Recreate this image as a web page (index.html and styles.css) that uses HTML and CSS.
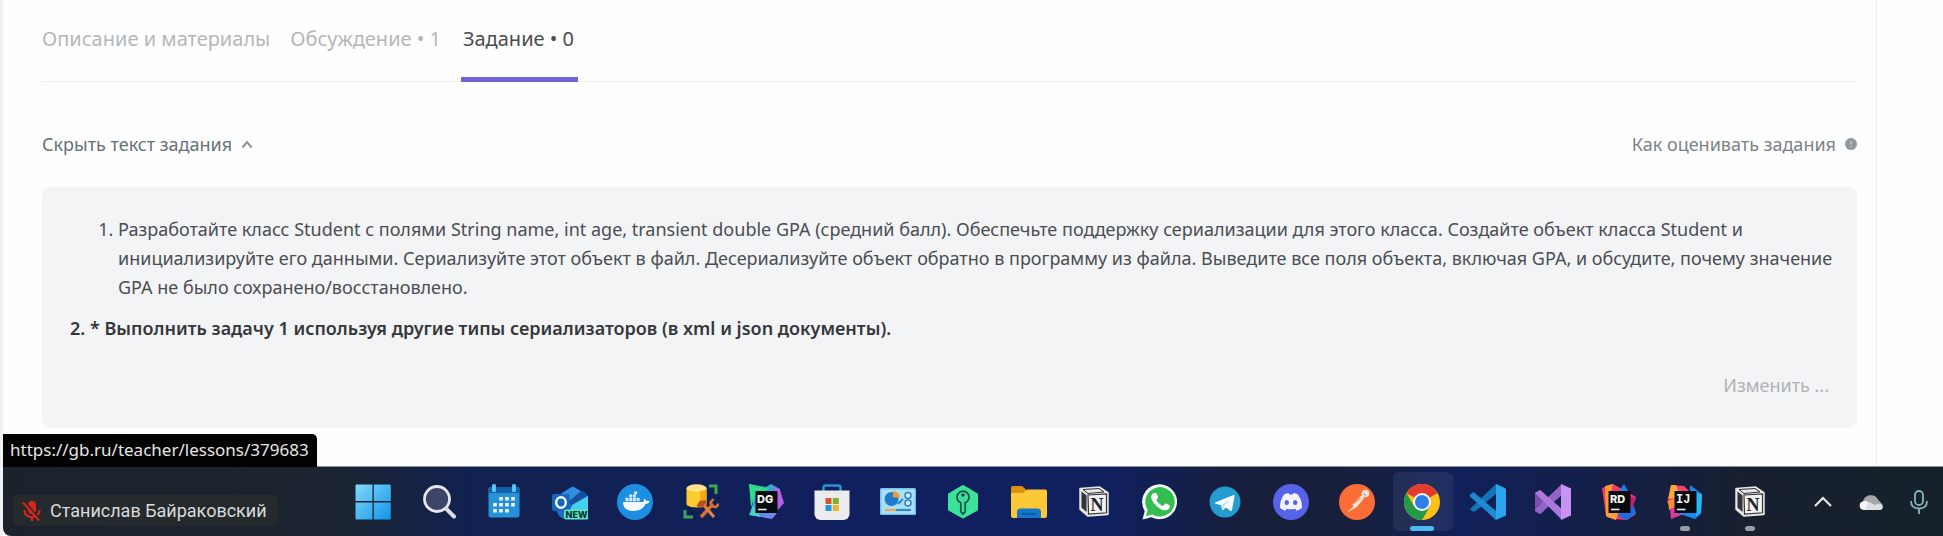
FILE: index.html
```html
<!DOCTYPE html>
<html lang="ru">
<head>
<meta charset="utf-8">
<title>Задание</title>
<meta name="viewport" content="width=device-width, initial-scale=1">
<link rel="stylesheet" href="styles.css">
</head>
<body>
<main class="lesson">
  <nav class="tabs" aria-label="Разделы урока">
    <a class="tab" href="#materials">Описание и материалы</a>
    <a class="tab" href="#discussion">Обсуждение • 1</a>
    <a class="tab tab-active" href="#task" aria-current="page">Задание • 0</a>
  </nav>
  <div class="task-bar">
    <button class="link-button" type="button">Скрыть текст задания
      <svg class="chevron" viewBox="0 0 12 10" aria-hidden="true"><path d="M1.500 8.500 6 3l4.500 5.500" fill="none" stroke="#8d9297" stroke-width="2"/></svg>
    </button>
    <a class="link-button help" href="#rating">Как оценивать задания
      <svg class="info" viewBox="0 0 12 12" aria-hidden="true"><circle cx="6" cy="6" r="6" fill="#929799"/><path d="M6 3v3.500M6 8v1.200" stroke="#c9cccd" stroke-width="1.500"/></svg>
    </a>
  </div>
  <section class="task" id="task">
    <ol class="task-list">
      <li>Разработайте класс Student с полями String name, int age, transient double GPA (средний балл). Обеспечьте поддержку сериализации для этого класса. Создайте объект класса Student и инициализируйте его данными. Сериализуйте этот объект в файл. Десериализуйте объект обратно в программу из файла. Выведите все поля объекта, включая GPA, и обсудите, почему значение GPA не было сохранено/восстановлено.</li>
    </ol>
    <ol class="task-list task-extra" start="2">
      <li>* Выполнить задачу 1 используя другие типы сериализаторов (в xml и json документы).</li>
    </ol>
    <button class="edit" type="button">Изменить ...</button>
  </section>
</main>

<footer class="taskbar">
  <div class="status">https://gb.ru/teacher/lessons/379683</div>
  <div class="speaker-area">
    <div class="speaker">
      <svg class="muted" viewBox="0 0 20 24" aria-hidden="true"><rect x="6" y="2" width="8" height="13" rx="4" fill="#d8261c"/><path d="M2.500 11c0 4.500 3 7 7.500 7s7.500-2.500 7.500-7M10 18v4" fill="none" stroke="#d8261c" stroke-width="2.200"/><path d="M2.500 2.500l16 18" stroke="#252a2d" stroke-width="1.500"/><path d="M1 3.500l16 18" stroke="#d8261c" stroke-width="2"/></svg>
      <span>Станислав Байраковский</span>
    </div>
  </div>
  <div class="apps">
    <button class="app" type="button" aria-label="Пуск"><svg viewBox="0 0 36 36"><defs><linearGradient id="win" gradientUnits="userSpaceOnUse" x1="1" y1="1" x2="35" y2="35"><stop offset="0" stop-color="#80d9f9"/><stop offset="1" stop-color="#1494ea"/></linearGradient></defs><path fill="url(#win)" d="M1.500.500h16v16.500h-17V1.500a1 1 0 0 1 1-1zM18.800.500h16a1 1 0 0 1 1 1V17h-17zM.500 18.500h17v17h-16a1 1 0 0 1-1-1zM18.800 18.500h17v16a1 1 0 0 1-1 1h-16z"/></svg></button>
    <button class="app" type="button" aria-label="Поиск"><svg viewBox="0 0 36 36"><circle cx="17" cy="15" r="12.500" fill="#3c4468" stroke="#e4e4ea" stroke-width="2.800"/><path d="M26.500 25l7.500 7.500" stroke="#dcdce2" stroke-width="4" stroke-linecap="round"/></svg></button>
    <button class="app" type="button" aria-label="Календарь"><svg viewBox="0 0 36 36"><rect x="2.500" y="3" width="31" height="30.500" rx="2" fill="#2491d8"/><path d="M2.500 9V5a2 2 0 0 1 2-2h27a2 2 0 0 1 2 2v4z" fill="#1262a8"/><g fill="#5bc3f2"><rect x="6" y="0" width="4" height="8" rx="1.500"/><rect x="26" y="0" width="4" height="8" rx="1.500"/></g><g fill="#f2f8fc"><path d="M13.200 13h3.600v3.600h-3.600zM19.200 13h3.600v3.600h-3.600zM25.200 13h3.600v3.600h-3.600zM7.200 19h3.600v3.600H7.200zM13.200 19h3.600v3.600h-3.600zM19.200 19h3.600v3.600h-3.600zM25.200 19h3.600v3.600h-3.600zM7.200 25h3.600v3.600H7.200zM13.200 25h3.600v3.600h-3.600zM19.200 25h3.600v3.600h-3.600z"/></g></svg></button>
    <button class="app" type="button" aria-label="Outlook"><svg viewBox="0 0 36 36"><path d="M5 12L20 2.500 36 12v20a3 3 0 0 1-3 3H14a9 9 0 0 1-9-8z" fill="#1b6fc4"/><path d="M8 11l13-8.500L34 10 20 18z" fill="#2f8fe4"/><path d="M17 17L30 6.500l6 4.500-16 12z" fill="#164f9e"/><path d="M36 12v20a3 3 0 0 1-3 3H15l5-14z" fill="#45d0ec"/><rect x="0" y="10" width="17.500" height="17" rx="2" fill="#1467bd"/><ellipse cx="9" cy="18.500" rx="4.800" ry="5.300" fill="none" stroke="#f4f8ff" stroke-width="2.400"/><rect x="12" y="25.500" width="24.500" height="10" rx="2" fill="#5de6c8"/><text x="13.500" y="34" class="badge-new">NEW</text></svg></button>
    <button class="app" type="button" aria-label="Docker"><svg viewBox="0 0 36 36"><circle cx="18" cy="18" r="18" fill="#1d8ee2"/><path d="M6 18h20c1.200-.300 1.400-2.300.700-3.600 1.800.500 2.200 1.600 2.600 2.600 1.400-.400 2.500-.100 3.300.500-.700 1.600-2 2.400-4.200 2.400C26.500 24.800 22 27 16.500 27 9.500 27 6 24 6 18z" fill="#f5f9fd"/><path d="M8.500 13.800h3v3.400h-3zM12.200 13.800h3v3.400h-3zM15.900 13.800h3v3.400h-3zM19.600 13.800h3v3.400h-3zM12.200 10.600h3v2.700h-3zM15.900 10.600h3v2.700h-3zM17.200 7.600h3v2.600h-3z" fill="#d6ebfa"/></svg></button>
    <button class="app" type="button" aria-label="Конструктор баз данных"><svg viewBox="0 0 36 36"><path d="M26 2h7v8M2 26v7h8" fill="none" stroke="#3ba55a" stroke-width="3"/><path d="M3.500 4v16c0 4.500 20 4.500 20 0V4z" fill="#fccb2e"/><path d="M17 3v20.500c4-.500 6.500-1.500 6.500-3.500V4z" fill="#f3a919"/><ellipse cx="13.500" cy="4" rx="10" ry="3.700" fill="#ffe48a"/><path d="M18 33l12-13" stroke="#d9702a" stroke-width="3.400"/><path d="M30.500 15l-3 3.500 1.500 4 4 .500 3-3" fill="none" stroke="#d9702a" stroke-width="2.600"/><path d="M19 19l12 14" stroke="#e2833d" stroke-width="3.200"/><path d="M13.500 22l3-5 6-1 1 3-5 5z" fill="#b84f1d"/></svg></button>
    <button class="app" type="button" aria-label="DataGrip"><svg viewBox="0 0 36 36"><defs><linearGradient id="dg" x1="0" y1="0" x2="1" y2="1"><stop offset="0" stop-color="#26d88b"/><stop offset=".5" stop-color="#3b9be0"/><stop offset="1" stop-color="#9475f5"/></linearGradient></defs><path d="M1 0l17 3 5-3 9 5-3 24-5 6L2 31l3-13z" fill="url(#dg)"/><path d="M1 0l20 5-14 7-4 11z" fill="#2ddb8d"/><path d="M26 3l6 3 4 13-6 7-5-9z" fill="#b65ee8"/><path d="M5 22l-4 9 12 2z" fill="#4acfc9"/><rect x="7.500" y="7" width="22" height="22" fill="#080b10"/><text x="9" y="18.500" class="ide-mark">DG</text><path d="M10 25.500h8.500" stroke="#eee" stroke-width="1.600"/></svg></button>
    <button class="app" type="button" aria-label="Microsoft Store"><svg viewBox="0 0 36 36"><path d="M9.500 8V3.200A1.700 1.700 0 0 1 11.200 1.500h13.600a1.700 1.700 0 0 1 1.700 1.700V8" fill="none" stroke="#2897d4" stroke-width="2.400"/><path d="M.500 6.500h35V30a6 6 0 0 1-6 6h-23a6 6 0 0 1-6-6z" fill="#ececef"/><path d="M11.500 14h6v6h-6z" fill="#d8542c"/><path d="M18.800 14h6v6h-6z" fill="#78b52a"/><path d="M11.500 21h6v6h-6z" fill="#2496da"/><path d="M18.800 21h6v6h-6z" fill="#f0b524"/></svg></button>
    <button class="app" type="button" aria-label="Панель управления"><svg viewBox="0 0 36 36"><rect x="0" y="4" width="36" height="27" rx="1.500" fill="#77c5ef"/><rect x="1.500" y="5.500" width="33" height="24" fill="#a9e0f8"/><circle cx="11.500" cy="15" r="7" fill="#1e7cc8"/><path d="M13 13.500V7a7 7 0 0 1 7 6.500z" fill="#f29a38"/><path d="M18 20l5-5" stroke="#3182bd" stroke-width="2"/><circle cx="28" cy="11.500" r="3" fill="#cfeefb" stroke="#3182bd" stroke-width="1.500"/><circle cx="28" cy="19" r="3" fill="#cfeefb" stroke="#3182bd" stroke-width="1.500"/><path d="M5 26h11" stroke="#f0a748" stroke-width="2.200"/><path d="M16 26h15" stroke="#2f88c8" stroke-width="2.200"/></svg></button>
    <button class="app" type="button" aria-label="Менеджер паролей"><svg viewBox="0 0 36 36"><path d="M18 2.500l13.500 8v15L18 33 4.500 25.500v-15z" fill="#3be39a" stroke="#3be39a" stroke-width="3" stroke-linejoin="round"/><path d="M15.800 18.700a6 6 0 1 1 4.400 0v9L18 30l-2.200-2.300z" fill="none" stroke="#124c48" stroke-width="1.700"/><circle cx="18" cy="11" r="1.800" fill="#124c48"/></svg></button>
    <button class="app" type="button" aria-label="Проводник"><svg viewBox="0 0 36 36"><path d="M0 10V4a2 2 0 0 1 2-2h9l4 3.500V10z" fill="#d9920f"/><path d="M0 9h12l4-3.500h18a2 2 0 0 1 2 2V32a2 2 0 0 1-2 2H2a2 2 0 0 1-2-2z" fill="#fbc935"/><path d="M6 34v-6a3.500 3.500 0 0 1 3.500-3.500h17A3.500 3.500 0 0 1 30 28v6z" fill="#1676c8"/><path d="M11 30h14" stroke="#0c5299" stroke-width="1.500"/></svg></button>
    <button class="app" type="button" aria-label="Notion"><svg viewBox="0 0 36 36"><path d="M4.500 5l19-1.500 8 5.500v21L12 31.500 4.500 25z" fill="#e6e6e4" stroke="#e6e6e4" stroke-width="2.500" stroke-linejoin="round"/><path d="M5.500 7.500l5 4V28l-5-4.500z" fill="#30333a"/><path d="M7 5.500L23 4.500l5 3.500-16 1.500z" fill="#e6e6e4" stroke="#30333a" stroke-width="1"/><path d="M12 11l18.500-1.200v19L12.500 30z" fill="#f3f3f0" stroke="#30333a" stroke-width="1.200"/><text x="14.500" y="27" class="notion-mark">N</text></svg></button>
    <button class="app" type="button" aria-label="WhatsApp"><svg viewBox="0 0 36 36"><path d="M.500 35.500L2.700 27A17.500 17.500 0 1 1 9.500 33.300z" fill="#f2f7f2"/><path d="M4 32l1.700-6.200A14.700 14.700 0 1 1 10.500 30.400z" fill="#35be50"/><path d="M12.500 9c-1.500 0-3.300 1.800-3.300 4.300 0 4 7.500 13 14 13 2.900 0 4.800-2 4.800-4.300 0-1-3.800-2.600-4.600-2.600-1 0-1.700 2.500-2.500 2.500-1.400 0-6-3.700-6.500-5.800-.100-.700 1.700-1.700 1.700-2.600 0-.800-1.500-4.200-2.100-4.500z" fill="#fff"/></svg></button>
    <button class="app" type="button" aria-label="Telegram"><svg viewBox="0 0 36 36"><circle cx="18" cy="18" r="15.500" fill="#259bd0"/><path d="M8 18.500L26.500 11c.800-.300 1.300.200 1.100 1L25 26c-.200 1-.900 1.200-1.700.700l-4.500-3.300-2.500 2.500c-.700.500-1.200.200-1.300-.500l-1-4.200-5.800-1.700c-.900-.300-.9-.700-.2-1z" fill="#f4fafd"/><path d="M14.500 21.500L23.500 15l-6.800 7.200-.4 3.500z" fill="#b6dcef"/></svg></button>
    <button class="app" type="button" aria-label="Discord"><svg viewBox="0 0 36 36"><circle cx="18" cy="18" r="18" fill="#5563e8"/><path d="M11 10.500c1.500-.8 3-1.200 4.500-1.400l.8 1.500h3.400l.8-1.500c1.500.2 3 .6 4.500 1.400 3 4.500 4.300 8.800 3.800 13.500-2 1.500-3.500 2.200-5.300 2.700l-1.300-2c-2.800.8-5.600.8-8.400 0l-1.300 2c-1.800-.5-3.300-1.200-5.300-2.700-.5-4.700.8-9 3.800-13.500z" fill="#f3f3fd"/><ellipse cx="13.800" cy="18.500" rx="2.200" ry="2.500" fill="#5563e8"/><ellipse cx="22.200" cy="18.500" rx="2.200" ry="2.500" fill="#5563e8"/></svg></button>
    <button class="app" type="button" aria-label="Postman"><svg viewBox="0 0 36 36"><circle cx="18" cy="18" r="18" fill="#fb6c36"/><circle cx="26.500" cy="9.500" r="3.800" fill="#fbe3d8"/><path d="M24 10L13 20.500l1.500 2L8 28.500l10-5.500 7-9z" fill="#fbe3d8"/><path d="M24.500 9.500l2.500 2M13.500 20.500l8-6.500" stroke="#e8673a" stroke-width="1" fill="none"/></svg></button>
    <button class="app app-current" type="button" aria-label="Chrome"><svg viewBox="0 0 36 36"><circle cx="18" cy="18" r="18" fill="#fbc116"/><path d="M18 18L2.400 9A18 18 0 0 1 33.600 9z" fill="#e33b2e"/><path d="M2.400 9a18 18 0 0 0 15.600 27l7.800-13.500L18 18l-7.800 4.500z" fill="#249a48"/><circle cx="18" cy="18" r="9" fill="#f5f7fb"/><circle cx="18" cy="18" r="7" fill="#2e7de9"/></svg></button>
    <button class="app" type="button" aria-label="Visual Studio Code"><svg viewBox="0 0 36 36"><path d="M26 0L4.500 20.500 1 24l-1 1.500L3.500 28 7 26 27 9z" fill="#1574b5"/><path d="M3.500 8L0 10.500v2L26 36V27z" fill="#1f8ad2"/><path d="M26 0l9 4a2 2 0 0 1 1 1.800v24.400a2 2 0 0 1-1 1.800l-9 4V0z" fill="#2aa5ee"/></svg></button>
    <button class="app" type="button" aria-label="Visual Studio"><svg viewBox="0 0 36 36"><path d="M0 9l5-3 4 3v18l-4 3-5-3z" fill="#7b4fb0"/><path d="M27 0L0 25.500V27l5 3L27 11z" fill="#9465c9"/><path d="M0 9l5-3 22 19v11z" fill="#ad79df"/><path d="M26 0l10 4.500v27L26 36z" fill="#c993f3"/></svg></button>
    <button class="app" type="button" aria-label="Rider"><svg viewBox="0 0 36 36"><path d="M1 4L12 0l9 5 14 8-3 9 3 8-9 6-13-1-8-3z" fill="#ef3b6b"/><path d="M4 2l8-2-3 12v20l7 3-11-3z" fill="#fb9c2d"/><path d="M19 6l4-6 4 7-1 5z" fill="#1b7eea"/><path d="M20 27l13-5 2 7-9 7-9-4z" fill="#1c6ce8"/><path d="M5 29h12l-2 7-9-3z" fill="#f6a23b"/><path d="M28 12l7 2-4 11z" fill="#b22475"/><rect x="7.500" y="7" width="22" height="22" fill="#090a0f"/><text x="9" y="18.500" class="ide-mark">RD</text><path d="M10 25.500h8.500" stroke="#eee" stroke-width="1.600"/></svg></button>
    <button class="app app-open" type="button" aria-label="IntelliJ IDEA"><svg viewBox="0 0 36 36"><path d="M4 1l13 1 5 5-8 12-9 16-2-13-3-4 3-6z" fill="#f5416c"/><path d="M4 1l5 0 3 8-5 5-6 1z" fill="#fca83c"/><path d="M1 17l8-3v9l-7 3z" fill="#fb8d35"/><path d="M3 25l7-3 7 8-13 5z" fill="#d93c98"/><path d="M23 1l12 9-1 20-6 5-18-6 13-5z" fill="#1b89ee"/><path d="M29 8l6 3-1 17-5 4z" fill="#23b9f2"/><rect x="7.500" y="7" width="22" height="22" fill="#0a0b10"/><text x="9" y="18.500" class="ide-mark ide-slab">IJ</text><path d="M10 25.500h8.500" stroke="#eee" stroke-width="1.600"/></svg></button>
    <button class="app app-open" type="button" aria-label="Notion, окно"><svg viewBox="0 0 36 36"><path d="M4.500 5l19-1.500 8 5.500v21L12 31.500 4.500 25z" fill="#e6e6e4" stroke="#e6e6e4" stroke-width="2.500" stroke-linejoin="round"/><path d="M5.500 7.500l5 4V28l-5-4.500z" fill="#30333a"/><path d="M7 5.500L23 4.500l5 3.500-16 1.500z" fill="#e6e6e4" stroke="#30333a" stroke-width="1"/><path d="M12 11l18.500-1.200v19L12.500 30z" fill="#f3f3f0" stroke="#30333a" stroke-width="1.200"/><text x="14.500" y="27" class="notion-mark">N</text></svg></button>
  </div>
  <div class="tray">
    <button class="tray-item" type="button" aria-label="Скрытые значки"><svg viewBox="0 0 24 24"><path d="M4 16l8-8 8 8" fill="none" stroke="#e6e8ea" stroke-width="2.200"/></svg></button>
    <button class="tray-item" type="button" aria-label="OneDrive"><svg viewBox="0 0 24 24"><path d="M4 12a8 8 0 0 1 15-2.500L24 15l-8 2z" fill="#a5a6a8"/><path d="M4.500 20A4.500 4.500 0 0 1 4 11.200c2-.600 4-.200 5.500.8L23 18.500A3.800 3.800 0 0 1 20.500 20z" fill="#f5f5f5"/><path d="M9 12l7 3.500c3-3 7-1.500 8 1.500a3.500 3.500 0 0 1-3.500 3H6z" fill="#dedfe0"/></svg></button>
    <button class="tray-item" type="button" aria-label="Микрофон"><svg viewBox="0 0 24 24"><rect x="8" y="1" width="8" height="14" rx="4" fill="none" stroke="#83b4bd" stroke-width="1.800"/><path d="M4 11c0 5 3.300 7.500 8 7.500s8-2.500 8-7.500M12 18.500V24" fill="none" stroke="#83b4bd" stroke-width="1.800"/></svg></button>
  </div>
</footer>
</body>
</html>
```
FILE: styles.css
```css
* {
  box-sizing: border-box;
}

body {
  margin: 0;
  min-height: 100vh;
  display: flex;
  flex-direction: column;
  background: #fefefe;
  border-left: 3px solid #f0f1f2;
  font-family: "Noto Sans", sans-serif;
  font-size: 18px;
  color: #4a4e52;
}

button {
  margin: 0;
  padding: 0;
  border: 0;
  background: none;
  font: inherit;
  cursor: pointer;
}

.lesson {
  flex: 1;
  margin-right: 66px;
  padding: 0 19px 38px 39px;
  border-right: 1px solid #efefef;
}

.tabs {
  display: flex;
  gap: 20px;
  box-shadow: inset 0 -1px #eeeeee;
}

.tab {
  padding: 27px 0 26px;
  border-bottom: 5px solid transparent;
  font-size: 20px;
  line-height: 24px;
  color: #b4b7b9;
  text-decoration: none;
}

.tab-active {
  padding-left: 2px;
  padding-right: 4px;
  border-bottom-color: #6f63d8;
  color: #4a4c4d;
}

.task-bar {
  display: flex;
  justify-content: space-between;
  margin-top: 50px;
}

.link-button {
  display: flex;
  align-items: center;
  gap: 9px;
  line-height: 24px;
  color: #687078;
  text-decoration: none;
}

.help {
  color: #7c8287;
}

.chevron {
  width: 12px;
  height: 10px;
}

.info {
  width: 12px;
  height: 12px;
}

.task {
  display: flex;
  flex-direction: column;
  margin-top: 31px;
  padding: 28px 16px 31px 28px;
  border-radius: 8px;
  background: #f3f4f6;
}

.task-list {
  margin: 0;
  padding-left: 48px;
  line-height: 29px;
}

.task-extra {
  margin-top: 12px;
  padding-left: 20px;
  font-weight: 600;
  color: #35383b;
}

.edit {
  align-self: flex-end;
  margin: 30px 12px 0 0;
  line-height: 24px;
  color: #b0b3b7;
}

.taskbar {
  position: relative;
  display: flex;
  height: 70px;
  border-top: 1px solid #87919a;
  border-bottom-left-radius: 8px;
  background: linear-gradient(90deg, #1b222b 0%, #1b2430 17%, #11214f 24%, #101f5e 45%, #101f5e 57%, #171f3c 64%, #181f3a 69%, #10205a 75%, #151f45 83%, #18202f 90%, #16212a 100%);
}

.status {
  position: absolute;
  left: 0;
  bottom: 100%;
  padding: 4px 8px 5px 7px;
  border-top-right-radius: 5px;
  background: #020202;
  font-size: 17px;
  line-height: 24px;
  color: #e6e6e6;
}

.speaker-area {
  flex: 0 0 337px;
  padding: 28px 0 10px 10px;
}

.speaker {
  display: inline-flex;
  align-items: center;
  gap: 8px;
  height: 31px;
  padding: 0 11px 0 9px;
  border-radius: 5px;
  background: #252a2d;
  font-family: Roboto, "Noto Sans", sans-serif;
  font-size: 18px;
  color: #d9dbdc;
}

.muted {
  width: 20px;
  height: 24px;
}

.apps {
  flex: 1;
  display: grid;
  grid-template-columns: repeat(22, 1fr);
}

.app {
  position: relative;
  display: grid;
  place-items: center;
  margin: 5px 4px;
  border-radius: 6px;
}

.app svg {
  width: 36px;
  height: 36px;
}

.app-current {
  background: rgba(255, 255, 255, 0.07);
  box-shadow: 4px 0 0 -1px rgba(255, 255, 255, 0.05);
}

.app-current::after,
.app-open::after {
  content: "";
  position: absolute;
  bottom: 0;
  left: 50%;
  width: 24px;
  height: 5px;
  margin-left: -12px;
  border-radius: 3px;
  background: #4cb8ee;
}

.app-open::after {
  width: 10px;
  margin-left: -5px;
  background: #989da3;
}

.tray {
  display: flex;
  margin-left: 16px;
}

.tray-item {
  display: grid;
  place-items: center;
  width: 48px;
}

.tray-item svg {
  width: 24px;
  height: 24px;
}

.badge-new {
  font: 800 9px Inter, sans-serif;
  fill: #06342f;
}

.ide-mark {
  font: 800 11px Inter, sans-serif;
  fill: #f4f4f4;
}

.ide-slab {
  font-family: "Liberation Mono", monospace;
  font-size: 12px;
}

.notion-mark {
  font: 700 18px "Liberation Serif", serif;
  fill: #20242c;
}
```
